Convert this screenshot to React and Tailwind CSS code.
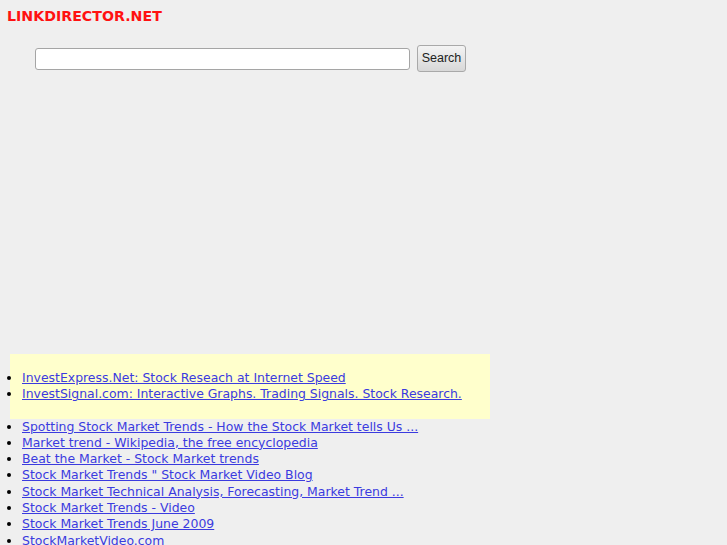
export default function App() {
  const ads = [
    "InvestExpress.Net: Stock Reseach at Internet Speed",
    "InvestSignal.com: Interactive Graphs. Trading Signals. Stock Research.",
  ];
  const links = [
    "Spotting Stock Market Trends - How the Stock Market tells Us ...",
    "Market trend - Wikipedia, the free encyclopedia",
    "Beat the Market - Stock Market trends",
    'Stock Market Trends " Stock Market Video Blog',
    "Stock Market Technical Analysis, Forecasting, Market Trend ...",
    "Stock Market Trends - Video",
    "Stock Market Trends June 2009",
    "StockMarketVideo.com",
  ];
  return (
    <div className="h-[545px] overflow-hidden bg-[#efefef] text-[12.45px] leading-[16.3px] [font-family:'DejaVu_Sans',sans-serif]">
      <div className="pl-[7px] pt-[6px] text-[14.2px] leading-[20px] font-bold text-[#ff1111]">LINKDIRECTOR.NET</div>
      <div className="mt-[19px] flex items-center pl-[35px]">
        <input
          type="text"
          className="h-[22px] w-[375px] rounded-[3px] border border-[#a5a5a5] bg-white"
        />
        <button className="ml-[7px] h-[27px] w-[49px] rounded-[3px] border border-[#a9a9a9] bg-gradient-to-b from-[#f4f4f4] to-[#d8d8d8] text-[12.5px] text-[#222] [font-family:'Liberation_Sans',sans-serif]">
          Search
        </button>
      </div>
      <div className="mt-[282px] ml-[10px] w-[480px] bg-[#ffffcc] py-4">
        <ul className="list-disc pl-[12px]">
          {ads.map((t) => (
            <li key={t}>
              <a href="#" className="text-[#3b3bdf] underline">{t}</a>
            </li>
          ))}
        </ul>
      </div>
      <ul className="list-disc pl-[22px]">
        {links.map((t) => (
          <li key={t}>
            <a href="#" className="text-[#3b3bdf] underline">{t}</a>
          </li>
        ))}
      </ul>
    </div>
  );
}
